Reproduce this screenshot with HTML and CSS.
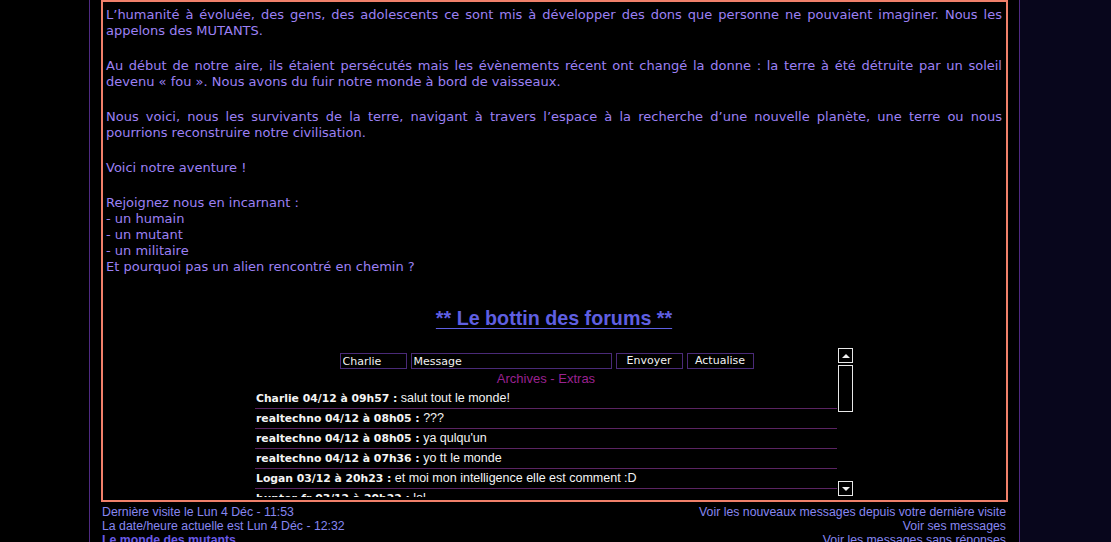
FILE: index.html
```html
<!DOCTYPE html>
<html lang="fr">
<head>
<meta charset="utf-8">
<title>Le monde des mutants</title>
<link rel="stylesheet" href="styles.css">
</head>
<body>
<div class="page">
  <div class="side side-left"></div>
  <div class="column">
    <div class="box">
      <div class="intro">
        <p>L’humanité à évoluée, des gens, des adolescents ce sont mis à développer des dons que personne ne pouvaient imaginer. Nous les appelons des MUTANTS.</p>
        <p>Au début de notre aire, ils étaient persécutés mais les évènements récent ont changé la donne : la terre à été détruite par un soleil devenu « fou ». Nous avons du fuir notre monde à bord de vaisseaux.</p>
        <p>Nous voici, nous les survivants de la terre, navigant à travers l’espace à la recherche d’une nouvelle planète, une terre ou nous pourrions reconstruire notre civilisation.</p>
        <p>Voici notre aventure !</p>
        <p class="left">Rejoignez nous en incarnant :<br>- un humain<br>- un mutant<br>- un militaire<br>Et pourquoi pas un alien rencontré en chemin ?</p>
      </div>

      <h2 class="bottin"><a href="#">** Le bottin des forums **</a></h2>

      <div class="chatbox">
        <div class="chat-content">
          <form class="chat-form">
            <input class="field field-name" type="text" value="Charlie">
            <input class="field field-msg" type="text" value="Message">
            <button class="btn" type="button">Envoyer</button>
            <button class="btn" type="button">Actualise</button>
          </form>
          <div class="chat-links"><a href="#">Archives</a> - <a href="#">Extras</a></div>
          <ul class="messages">
            <li><b>Charlie 04/12 à 09h57 :</b> salut tout le monde!</li>
            <li><b>realtechno 04/12 à 08h05 :</b> ???</li>
            <li><b>realtechno 04/12 à 08h05 :</b> ya qulqu'un</li>
            <li><b>realtechno 04/12 à 07h36 :</b> yo tt le monde</li>
            <li><b>Logan 03/12 à 20h23 :</b> et moi mon intelligence elle est comment :D</li>
            <li><b>hunter-fr 03/12 à 20h22 :</b> lol</li>
          </ul>
        </div>
        <div class="scrollbar">
          <div class="sb-btn sb-up"><span class="arrow-up"></span></div>
          <div class="sb-thumb"></div>
          <div class="sb-track"></div>
          <div class="sb-btn sb-down"><span class="arrow-down"></span></div>
        </div>
      </div>
    </div>

    <div class="footer">
      <div class="foot-left">
        <div>Dernière visite le Lun 4 Déc - 11:53</div>
        <div>La date/heure actuelle est Lun 4 Déc - 12:32</div>
        <div><a class="home" href="#">Le monde des mutants</a></div>
      </div>
      <div class="foot-right">
        <div><a href="#">Voir les nouveaux messages depuis votre dernière visite</a></div>
        <div><a href="#">Voir ses messages</a></div>
        <div><a href="#">Voir les messages sans réponses</a></div>
      </div>
    </div>
  </div>
  <div class="side side-right"></div>
</div>
</body>
</html>
```

FILE: styles.css
```css
html, body {
  margin: 0;
  padding: 0;
  background: #000;
  overflow: hidden;
}

.page {
  display: flex;
  align-items: stretch;
  min-height: 542px;
}

.side-left {
  width: 89px;
  flex: none;
  background: #000;
}

.side-right {
  flex: 1;
  background: #08061c;
}

.column {
  width: 907px;
  flex: none;
  padding: 0 11px;
  border-left: 1px solid #4f2a82;
  border-right: 1px solid #4f2a82;
  background: #000;
}

/* orange framed content block */
.box {
  border: 2px solid #f0806a;
  padding: 5px 4px 3px 3px;
}

.intro {
  font-family: "DejaVu Sans", Verdana, sans-serif;
  font-size: 13px;
  line-height: 16px;
  color: #9c80f4;
  text-align: justify;
}

.intro p {
  margin: 0 0 19px;
}

.intro p.left {
  text-align: left;
  margin-bottom: 0;
}

.bottin {
  margin: 32px 0 0;
  text-align: center;
  font-family: "Liberation Sans", Arial, sans-serif;
  font-size: 19.7px;
  font-weight: bold;
  line-height: 22px;
}

.bottin a {
  color: #5f5fe2;
  text-decoration: underline;
  text-underline-offset: 3px;
}

/* chat box */
.chatbox {
  width: 598px;
  height: 150px;
  margin: 18px auto 0;
  display: flex;
}

.chat-content {
  width: 583px;
  overflow: hidden;
  padding-top: 6px;
}

.chat-form {
  display: flex;
  justify-content: center;
  gap: 4px;
  margin: 0;
  padding-left: 1px;
}

.field,
.btn {
  box-sizing: border-box;
  height: 16px;
  margin: 0;
  padding: 0 2px;
  border: 1px solid #4a2a78;
  background: #000;
  color: #f2f2f2;
  font-family: "DejaVu Sans", Verdana, sans-serif;
  font-size: 11px;
  line-height: 14px;
  outline: none;
}

.field-name { width: 67px; }
.field-msg { width: 201px; }
.btn { width: 67px; text-align: center; padding: 0; }

.chat-links {
  text-align: center;
  font-family: "Liberation Sans", Arial, sans-serif;
  font-size: 13px;
  line-height: 16px;
  margin-top: 2px;
  color: #9a2290;
}

.chat-links a {
  color: #9a2290;
  text-decoration: none;
}

.messages {
  list-style: none;
  margin: 2px 0 0;
  padding: 0;
}

.messages li {
  height: 19px;
  line-height: 19px;
  border-bottom: 1px solid #5a2462;
  padding-left: 1px;
  color: #f4f4f4;
  font-family: "Liberation Sans", Arial, sans-serif;
  font-size: 12.5px;
  white-space: nowrap;
}

.messages b {
  font-family: "DejaVu Sans", Verdana, sans-serif;
  font-size: 10.8px;
  font-weight: bold;
}

/* hand-drawn scrollbar */
.scrollbar {
  width: 15px;
  flex: none;
  margin-left: 1px;
  padding-top: 1px;
  display: flex;
  flex-direction: column;
}

.sb-btn,
.sb-thumb {
  box-sizing: border-box;
  width: 15px;
  border: 1px solid #e8e8e8;
  background: #000;
}

.sb-btn {
  height: 15px;
  display: flex;
  align-items: center;
  justify-content: center;
}

.sb-thumb {
  height: 47px;
  margin-top: 2px;
}

.sb-track {
  flex: 1;
}

.sb-down {
  margin-bottom: 1px;
}

.arrow-up {
  width: 0;
  height: 0;
  border-left: 4px solid transparent;
  border-right: 4px solid transparent;
  border-bottom: 4px solid #f0f0f0;
}

.arrow-down {
  width: 0;
  height: 0;
  border-left: 4px solid transparent;
  border-right: 4px solid transparent;
  border-top: 4px solid #f0f0f0;
}

/* footer under the frame */
.footer {
  display: flex;
  justify-content: space-between;
  padding: 3px 2px 0 1px;
  font-family: "Liberation Sans", Arial, sans-serif;
  font-size: 12.3px;
  line-height: 14px;
  color: #8686f0;
}

.foot-right {
  text-align: right;
}

.footer a {
  color: #8686f0;
  text-decoration: none;
}

.footer a.home {
  color: #6a5ae8;
  font-weight: bold;
  text-decoration: underline;
}
```
